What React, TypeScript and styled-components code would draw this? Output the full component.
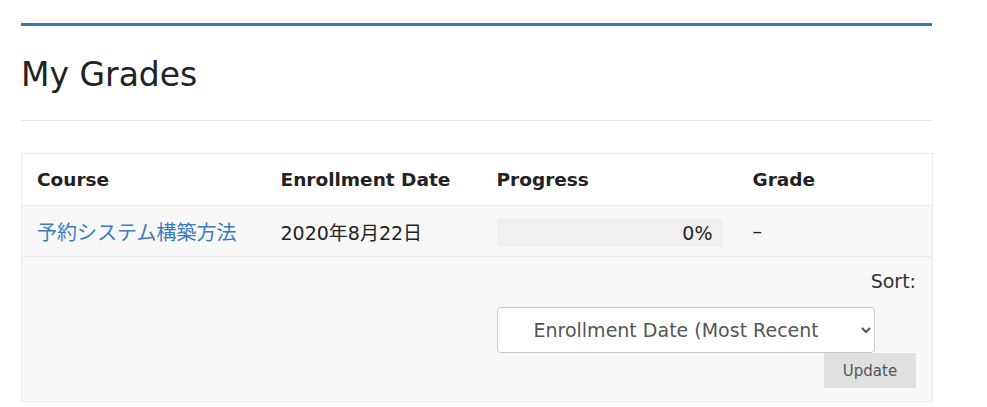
import React from 'react'
import styled, { createGlobalStyle } from 'styled-components'

const GlobalStyle = createGlobalStyle`
  body {
    margin: 0;
    background: #fff;
    font-family: "DejaVu Sans", "Noto Sans CJK JP", sans-serif;
    color: #222;
  }
`

const Page = styled.div`
  width: 911px;
  margin: 0 0 0 21px;
  padding-top: 23px;
`

const Header = styled.header`
  border-top: 3px solid #3677b7;
  border-bottom: 1px solid #e6e6e6;
  padding: 28px 0 24px;
`

const Title = styled.h1`
  margin: 0;
  font-size: 33px;
  font-weight: normal;
  line-height: 42px;
  color: #222;
`

const Table = styled.table`
  margin-top: 32px;
  width: 100%;
  border-collapse: collapse;
  table-layout: fixed;
  border: 1px solid #ebebeb;
  font-size: 19px;
`

const Col = styled.col<{ $w: number }>`
  width: ${({ $w }) => $w}px;
`

const HeadCell = styled.th`
  text-align: left;
  font-weight: bold;
  font-size: 18.5px;
  padding: 0 16px 0 15px;
  height: 51px;
  background: #fff;
  border-bottom: 1px solid #ebebeb;
`

const Row = styled.tr`
  background: #f8f8f8;
`

const Cell = styled.td<{ $last?: boolean }>`
  padding: 0 16px 0 15px;
  height: 50px;
  border-bottom: ${({ $last }) => ($last ? 'none' : '1px solid #ebebeb')};
  vertical-align: middle;
`

const CourseLink = styled.a`
  color: #3a7bbf;
  text-decoration: none;
  font-size: 20px;
`

const Bar = styled.div`
  width: 226px;
  height: 28px;
  background: #f0f0f0;
  box-sizing: border-box;
  padding-right: 10px;
  text-align: right;
  line-height: 28px;
  margin-top: 4px;
`

const SortCell = styled.td`
  padding: 10px 16px 13px 15px;
  vertical-align: top;
  text-align: right;
`

const SortLabel = styled.div`
  font-size: 19px;
  color: #333;
  line-height: 28px;
`

const Select = styled.select`
  display: block;
  margin-top: 12px;
  width: 378px;
  height: 46px;
  border: 1px solid #ccc;
  border-radius: 4px;
  background: #fff;
  font-family: inherit;
  font-size: 19px;
  color: #555;
  text-align: center;
  text-align-last: center;
  padding: 0 40px 0 32px;
`

const UpdateButton = styled.button`
  display: block;
  margin-left: auto;
  width: 92px;
  height: 35px;
  border: none;
  background: #e0e0e0;
  color: #555;
  font-family: inherit;
  font-size: 15px;
`

export default function App() {
  return (
    <>
      <GlobalStyle />
      <Page>
        <Header>
          <Title>My Grades</Title>
        </Header>
        <Table>
          <colgroup>
            <Col $w={244} />
            <Col $w={216} />
            <Col $w={256} />
            <Col $w={195} />
          </colgroup>
          <thead>
            <tr>
              <HeadCell>Course</HeadCell>
              <HeadCell>Enrollment Date</HeadCell>
              <HeadCell>Progress</HeadCell>
              <HeadCell>Grade</HeadCell>
            </tr>
          </thead>
          <tbody>
            <Row>
              <Cell>
                <CourseLink href="#">予約システム構築方法</CourseLink>
              </Cell>
              <Cell>2020年8月22日</Cell>
              <Cell>
                <Bar>0%</Bar>
              </Cell>
              <Cell>–</Cell>
            </Row>
            <Row>
              <Cell colSpan={2} $last />
              <SortCell colSpan={2}>
                <SortLabel>Sort:</SortLabel>
                <Select defaultValue="recent">
                  <option value="recent">Enrollment Date (Most Recent)</option>
                  <option value="oldest">Enrollment Date (Oldest)</option>
                  <option value="name">Course Name</option>
                </Select>
                <UpdateButton>Update</UpdateButton>
              </SortCell>
            </Row>
          </tbody>
        </Table>
      </Page>
    </>
  )
}
